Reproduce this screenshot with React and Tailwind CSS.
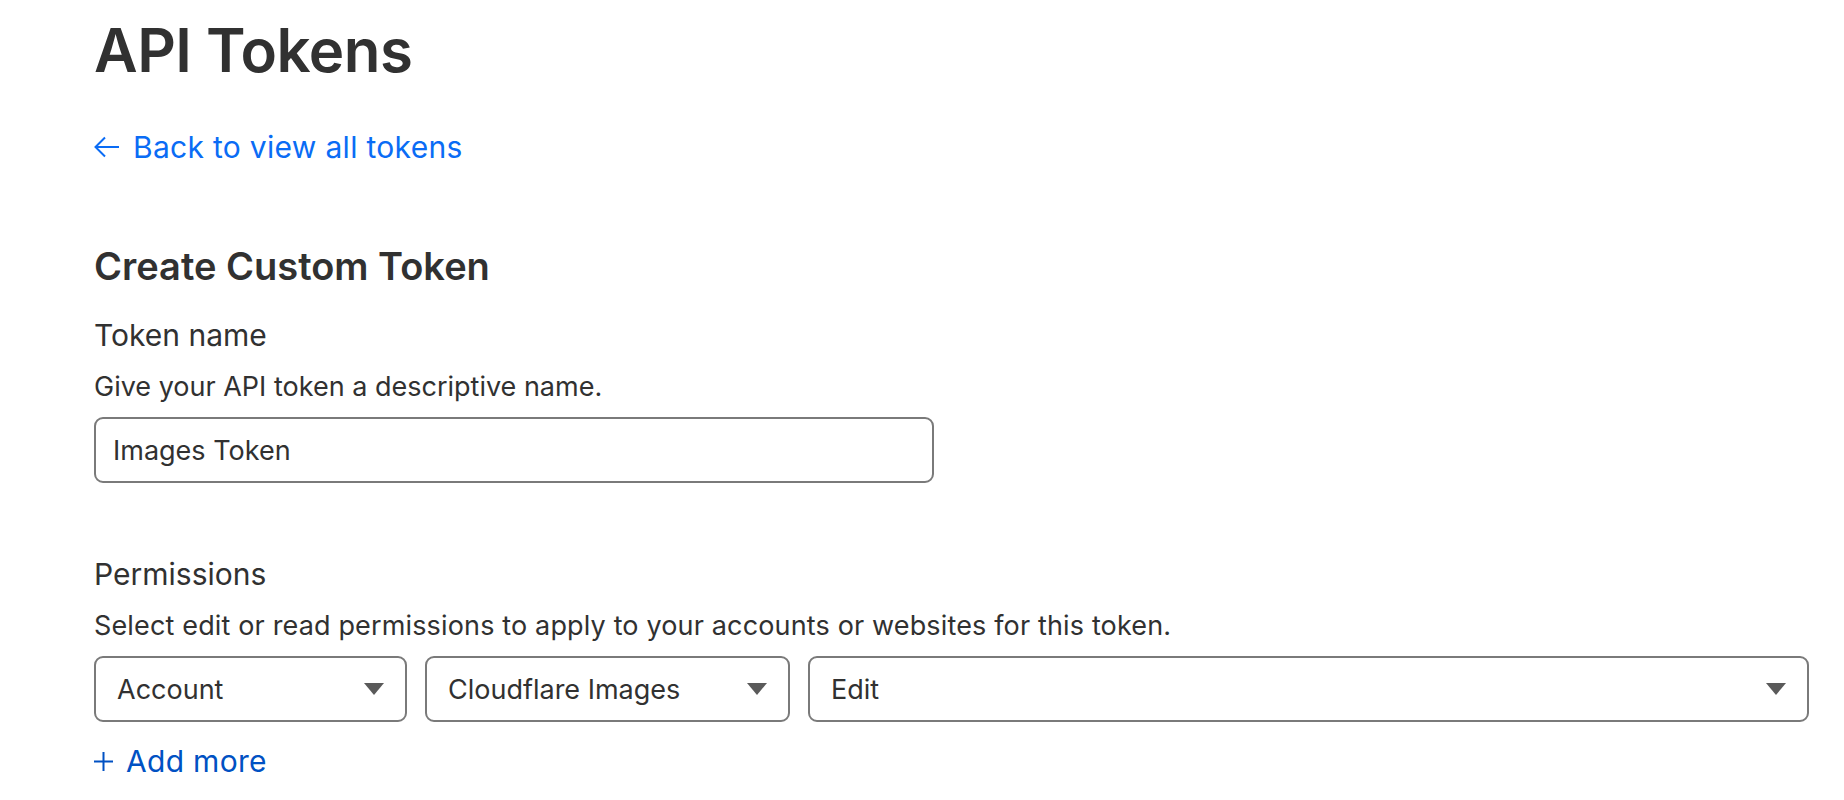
import React, { useState } from 'react';

const font = { fontFamily: 'Inter, "Noto Sans", sans-serif' };

const Caret = () => (
  <svg width="20" height="12" viewBox="0 0 20 12" className="shrink-0">
    <path d="M0 0 L20 0 L10 12 Z" fill="#5a5a5a" />
  </svg>
);

const Select = ({ value, className }) => (
  <div
    className={`h-[66px] flex items-center justify-between pl-[21px] pr-[21px] border-2 border-[#7a7a7a] rounded-[9px] bg-white ${className}`}
  >
    <span className="text-[27px] text-[#313131] leading-none">{value}</span>
    <Caret />
  </div>
);

const App = () => {
  const [name, setName] = useState('Images Token');

  return (
    <div className="min-h-screen bg-white text-[#313131]" style={font}>
      <div className="pl-[94px] pr-[35px]">
        <h1 className="mt-[13px] text-[60px] leading-[74px] font-semibold tracking-[-0.5px]">API Tokens</h1>

        <a href="#" className="mt-[40px] flex items-center gap-[13px] h-[40px] text-[30px] tracking-[0.3px] text-[#0a6cf5] w-fit">
          <svg width="26" height="22" viewBox="0 0 26 22" fill="none" stroke="#0a6cf5" strokeWidth="2">
            <path d="M25 11 H2 M11 1.5 L1.5 11 L11 20.5" />
          </svg>
          <span>Back to view all tokens</span>
        </a>

        <h2 className="mt-[77px] text-[38px] leading-[44px] font-semibold">Create Custom Token</h2>

        <div className="mt-[29px] text-[30px] leading-[36px]">Token name</div>
        <p className="mt-[18px] text-[27px] leading-[32px]">Give your API token a descriptive name.</p>
        <input
          value={name}
          onChange={(e) => setName(e.target.value)}
          className="mt-[14px] block w-[840px] h-[66px] px-[17px] text-[27px] text-[#313131] border-2 border-[#7a7a7a] rounded-[9px] outline-none"
        />

        <div className="mt-[73px] text-[30px] leading-[36px]">Permissions</div>
        <p className="mt-[18px] text-[27px] leading-[32px] tracking-[0.15px]">
          Select edit or read permissions to apply to your accounts or websites for this token.
        </p>

        <div className="mt-[14px] flex gap-[18px]">
          <Select value="Account" className="w-[313px] shrink-0" />
          <Select value="Cloudflare Images" className="w-[365px] shrink-0" />
          <Select value="Edit" className="flex-1" />
        </div>

        <a href="#" className="mt-[19px] flex items-center gap-[13px] h-[40px] text-[30px] tracking-[0.3px] text-[#0051c3] w-fit">
          <svg width="19" height="19" viewBox="0 0 19 19" fill="none" stroke="#0051c3" strokeWidth="2">
            <path d="M9.5 0 V19 M0 9.5 H19" />
          </svg>
          <span>Add more</span>
        </a>
      </div>
    </div>
  );
};

export default App;
